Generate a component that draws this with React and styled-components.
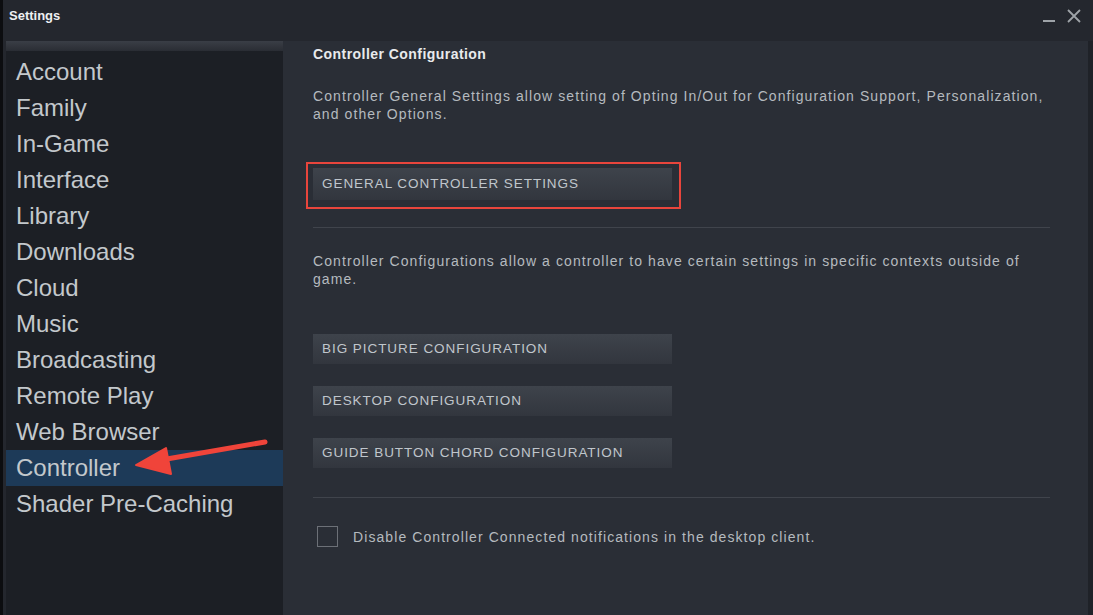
import React from 'react';
import styled, { createGlobalStyle } from 'styled-components';

const GlobalStyle = createGlobalStyle`
  html, body, #root {
    margin: 0;
    padding: 0;
    width: 100%;
    height: 100%;
    overflow: hidden;
  }
  body {
    font-family: "Liberation Sans", Arial, sans-serif;
    background: #24272e;
  }
`;

const Window = styled.div`
  position: relative;
  display: flex;
  flex-direction: column;
  width: 100vw;
  height: 100vh;
  background: #24272e;
  border-left: 3px solid #0c0d10;
  box-sizing: border-box;
`;

const TitleBar = styled.div`
  display: flex;
  align-items: center;
  justify-content: space-between;
  height: 41px;
  padding: 0 12px 10px 6px;
  box-sizing: border-box;
  flex-shrink: 0;
`;

const Title = styled.div`
  color: #eef0f2;
  font-size: 13px;
  font-weight: bold;
`;

const Controls = styled.div`
  display: flex;
  align-items: center;
  gap: 12px;
  color: #9ea3a8;
`;

const Body = styled.div`
  display: flex;
  flex: 1;
  padding-left: 3px;
  min-height: 0;
`;

const Sidebar = styled.div`
  width: 277px;
  flex-shrink: 0;
  background: #1c1f25;
  display: flex;
  flex-direction: column;
`;

const SidebarStrip = styled.div`
  height: 10px;
  background: linear-gradient(to bottom, #3a3e46, #2a2d34);
  margin-bottom: 3px;
`;

const NavItem = styled.div`
  height: 36px;
  line-height: 36px;
  padding-left: 10px;
  font-size: 24px;
  color: #c3c8cc;
  background: ${p => (p.$active ? '#1d3a58' : 'transparent')};
`;

const Content = styled.div`
  flex: 1;
  background: #2a2e36;
  padding: 4px 38px 0 30px;
  border-right: 5px solid #1f2228;
  display: flex;
  flex-direction: column;
`;

const Heading = styled.div`
  color: #e8eaec;
  font-size: 14px;
  font-weight: bold;
  line-height: 18px;
  letter-spacing: 0.45px;
`;

const Desc = styled.div`
  color: #b5babf;
  font-size: 14px;
  line-height: 18px;
  letter-spacing: 1.08px;
  margin-top: ${p => p.$top || 0}px;
`;

const Highlight = styled.div`
  position: relative;
  align-self: flex-start;
  margin-top: ${p => p.$top || 0}px;
  &::after {
    content: '';
    position: absolute;
    top: -6px;
    left: -7px;
    right: -9px;
    bottom: -9px;
    border: 2px solid #e8453c;
  }
`;

const Button = styled.div`
  width: 359px;
  height: ${p => p.$h || 30}px;
  line-height: ${p => p.$h || 30}px;
  margin-top: ${p => p.$top || 0}px;
  padding-left: 9px;
  box-sizing: border-box;
  background: linear-gradient(to bottom, #3e434b, #32363e);
  color: #c0c6cc;
  font-size: 13.5px;
  letter-spacing: 0.95px;
  text-transform: uppercase;
`;

const Divider = styled.div`
  height: 1px;
  background: #40444c;
  margin-top: ${p => p.$top || 0}px;
`;

const CheckRow = styled.div`
  display: flex;
  align-items: center;
  gap: 15px;
  margin-top: 28px;
  padding-left: 4px;
`;

const CheckBox = styled.div`
  width: 19px;
  height: 19px;
  border: 1px solid #6c7077;
`;

const CheckLabel = styled.div`
  color: #b5babf;
  font-size: 14px;
  letter-spacing: 1.08px;
`;

const Arrow = styled.svg`
  position: absolute;
  left: 0;
  top: 0;
  pointer-events: none;
`;

const items = [
  'Account', 'Family', 'In-Game', 'Interface', 'Library', 'Downloads', 'Cloud',
  'Music', 'Broadcasting', 'Remote Play', 'Web Browser', 'Controller', 'Shader Pre-Caching',
];

const App = () => {
  return (
    <>
      <GlobalStyle />
      <Window>
        <TitleBar>
          <Title>Settings</Title>
          <Controls>
            <svg width="12" height="14" viewBox="0 0 12 14">
              <rect x="0" y="11" width="12" height="2" fill="#9ea3a8" />
            </svg>
            <svg width="14" height="14" viewBox="0 0 14 14">
              <path d="M1 1 L13 13 M13 1 L1 13" stroke="#9ea3a8" strokeWidth="1.8" />
            </svg>
          </Controls>
        </TitleBar>
        <Body>
          <Sidebar>
            <SidebarStrip />
            {items.map(it => (
              <NavItem key={it} $active={it === 'Controller'}>{it}</NavItem>
            ))}
          </Sidebar>
          <Content>
            <Heading>Controller Configuration</Heading>
            <Desc $top={24}>
              Controller General Settings allow setting of Opting In/Out for Configuration Support, Personalization,
              <br />and other Options.
            </Desc>
            <Highlight $top={45}>
              <Button $h={32}>General Controller Settings</Button>
            </Highlight>
            <Divider $top={27} />
            <Desc $top={24}>
              Controller Configurations allow a controller to have certain settings in specific contexts outside of
              <br />game.
            </Desc>
            <Button $top={46}>Big Picture Configuration</Button>
            <Button $top={22}>Desktop Configuration</Button>
            <Button $top={22}>Guide Button Chord Configuration</Button>
            <Divider $top={29} />
            <CheckRow>
              <CheckBox />
              <CheckLabel>Disable Controller Connected notifications in the desktop client.</CheckLabel>
            </CheckRow>
          </Content>
        </Body>
        <Arrow width="300" height="500">
          <line x1="262" y1="442" x2="158" y2="460" stroke="#f0443a" strokeWidth="5" strokeLinecap="round" />
          <polygon points="133,465 163,448 168,474" fill="#f0443a" stroke="#f0443a" strokeWidth="2" strokeLinejoin="round" />
        </Arrow>
      </Window>
    </>
  );
};

export default App;
